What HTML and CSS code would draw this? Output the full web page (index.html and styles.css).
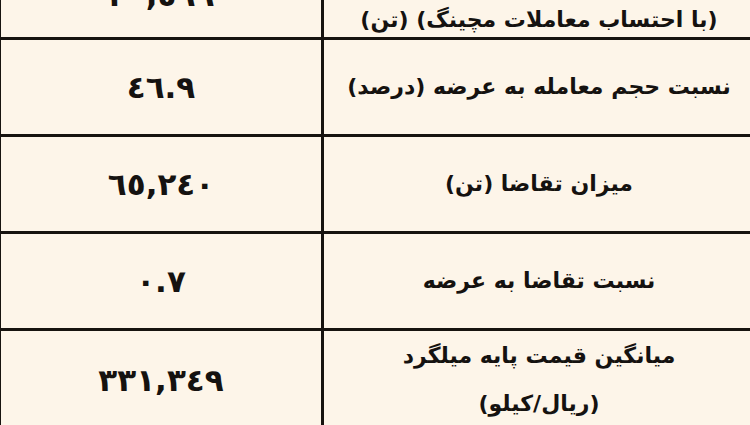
FILE: index.html
```html
<!DOCTYPE html>
<html lang="fa" dir="rtl">
<head>
<meta charset="utf-8">
<link rel="stylesheet" href="styles.css">
</head>
<body>
<div class="sheet">
<table class="stats">
  <tr class="row row-first">
    <td class="label label-first">میزان معاملات<br>(با احتساب معاملات مچینگ) (تن)</td>
    <td class="value value-first">٣٠,٥٩٩</td>
  </tr>
  <tr class="row">
    <td class="label">نسبت حجم معامله به عرضه (درصد)</td>
    <td class="value">٤٦.٩</td>
  </tr>
  <tr class="row">
    <td class="label">میزان تقاضا (تن)</td>
    <td class="value">٦٥,٢٤٠</td>
  </tr>
  <tr class="row">
    <td class="label">نسبت تقاضا به عرضه</td>
    <td class="value">٠.٧</td>
  </tr>
  <tr class="row row-last">
    <td class="label">میانگین قیمت پایه میلگرد<br>(ریال/کیلو)</td>
    <td class="value">٣٣١,٣٤٩</td>
  </tr>
</table>
</div>
</body>
</html>
```

FILE: styles.css
```css
html, body {
  margin: 0;
  padding: 0;
  background: #fdf5e9;
}
.sheet {
  width: 750px;
  height: 425px;
  overflow: hidden;
  position: relative;
}
.stats {
  border-collapse: collapse;
  margin-top: -34px;
  margin-right: -7px;
  width: 759px;
  table-layout: fixed;
  font-family: "DejaVu Sans", sans-serif;
  font-weight: bold;
  color: #151210;
}
.stats td {
  border: 3px solid #17130f;
  text-align: center;
  vertical-align: middle;
  padding: 0;
}
.row { height: 97px; }
.row-first { height: 68px; }
.row-last { height: 100px; }
.stats .label {
  width: 430px;
  font-size: 22px;
  line-height: 48px;
}
.stats .label-first {
  line-height: 34px;
  vertical-align: bottom;
}
.stats .value {
  font-size: 31px;
}
.stats .value-first {
  vertical-align: top;
  padding-top: 9px;
  line-height: 35px;
}
```
